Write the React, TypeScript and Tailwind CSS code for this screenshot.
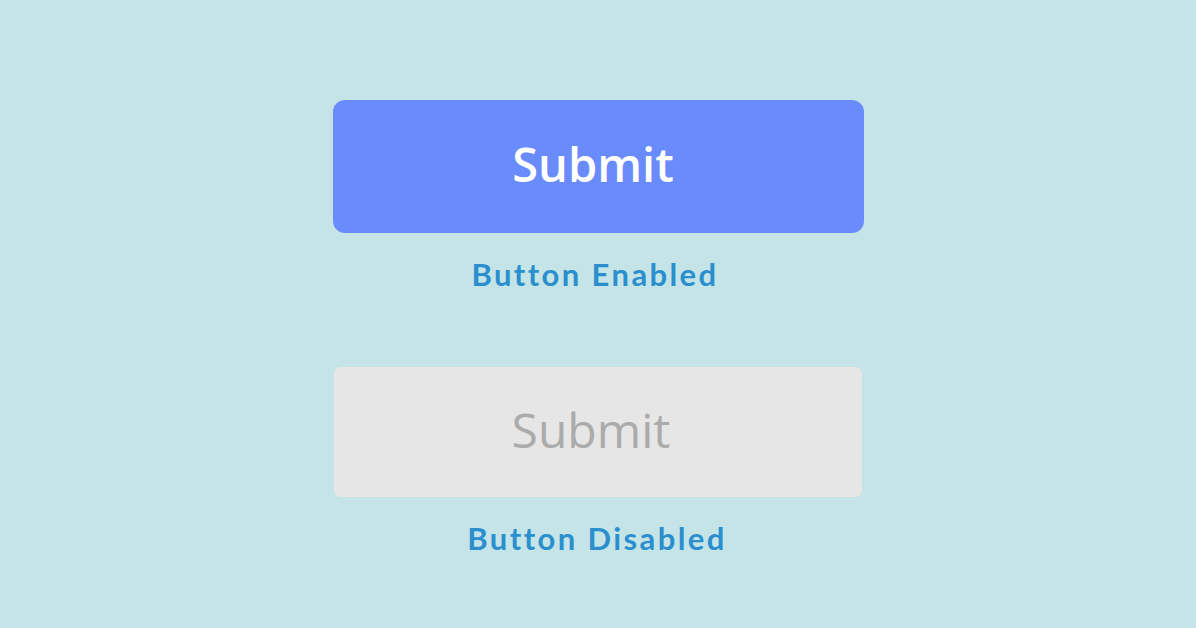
export default function App() {
  return (
    <div className="w-[1196px] h-[628px] bg-[#c4e4e8] flex flex-col items-center pt-[100px]">
      <button className="w-[531px] h-[133px] rounded-[12px] bg-[#6a8bfc] text-white text-[47px] font-semibold font-['Open_Sans',sans-serif] flex items-center justify-center pb-[4px] pr-[10px]">
        Submit
      </button>
      <div className="mt-[23px] h-[36px] flex items-center text-[31px] font-bold text-[#2b8fce] font-['Lato',sans-serif] tracking-[2.4px] pr-[6px]">
        Button Enabled
      </div>
      <button
        disabled
        className="mt-[75px] w-[528px] h-[130px] rounded-[6px] bg-[#e6e6e6] text-[#ababab] text-[48px] font-['Open_Sans',sans-serif] flex items-center justify-center pb-[4px] pr-[14px]"
      >
        Submit
      </button>
      <div className="mt-[23px] h-[36px] flex items-center text-[31px] font-bold text-[#2b8fce] font-['Lato',sans-serif] tracking-[2.4px] pr-[2px]">
        Button Disabled
      </div>
    </div>
  );
}
